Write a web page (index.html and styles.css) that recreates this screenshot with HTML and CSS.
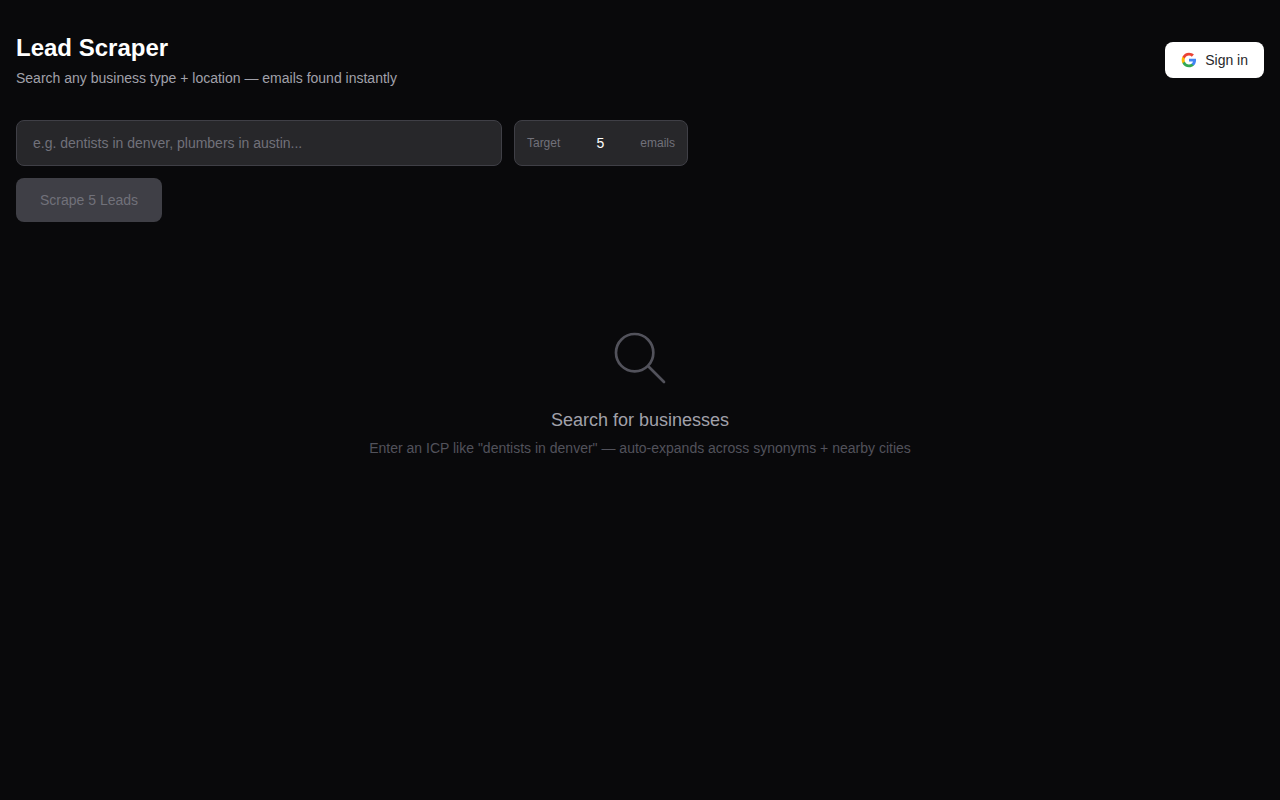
FILE: index.html
```html
<!DOCTYPE html>
<html lang="en">
<head>
    <meta charset="UTF-8">
    <meta name="viewport" content="width=device-width, initial-scale=1.0">
    <title>Lead Scraper</title>
    <link rel="stylesheet" href="styles.css">
</head>
<body>
    <main class="page">
        <header class="header">
            <div>
                <h1 class="title">Lead Scraper</h1>
                <p class="subtitle">Search any business type + location — emails found instantly</p>
            </div>
            <button class="sign-in" type="button">
                <svg class="google-icon" viewBox="0 0 24 24">
                    <path fill="#4285F4" d="M22.56 12.25c0-.78-.07-1.53-.2-2.25H12v4.26h5.92c-.26 1.37-1.04 2.53-2.21 3.31v2.77h3.57c2.08-1.92 3.28-4.74 3.28-8.09z"/>
                    <path fill="#34A853" d="M12 23c2.97 0 5.46-.98 7.28-2.66l-3.57-2.77c-.98.66-2.23 1.06-3.71 1.06-2.86 0-5.29-1.93-6.16-4.53H2.18v2.84C3.99 20.53 7.7 23 12 23z"/>
                    <path fill="#FBBC05" d="M5.84 14.09c-.22-.66-.35-1.36-.35-2.09s.13-1.43.35-2.09V7.07H2.18C1.43 8.55 1 10.22 1 12s.43 3.45 1.18 4.93l3.66-2.84z"/>
                    <path fill="#EA4335" d="M12 5.38c1.62 0 3.06.56 4.21 1.64l3.15-3.15C17.45 2.09 14.97 1 12 1 7.7 1 3.99 3.47 2.18 7.07l3.66 2.84c.87-2.6 3.3-4.53 6.16-4.53z"/>
                </svg>
                Sign in
            </button>
        </header>

        <form class="search-form">
            <input class="query" type="text" placeholder="e.g. dentists in denver, plumbers in austin...">
            <label class="target">
                <span>Target</span>
                <input class="target-count" type="number" min="1" value="5">
                <span>emails</span>
            </label>
            <button class="scrape-btn" type="submit" disabled>Scrape 5 Leads</button>
        </form>

        <section class="empty">
            <svg class="empty-icon" viewBox="0 0 24 24" fill="none" stroke="currentColor">
                <path stroke-linecap="round" stroke-linejoin="round" stroke-width="1" d="M21 21l-6-6m2-5a7 7 0 11-14 0 7 7 0 0114 0z"/>
            </svg>
            <p class="empty-title">Search for businesses</p>
            <p class="empty-text">Enter an ICP like "dentists in denver" — auto-expands across synonyms + nearby cities</p>
        </section>
    </main>
</body>
</html>
```
FILE: styles.css
```css
* {
    box-sizing: border-box;
}

body {
    margin: 0;
    min-height: 100vh;
    background-color: #09090b;
    color: #ffffff;
    font-family: "Liberation Sans", Arial, sans-serif;
    font-size: 14px;
    line-height: 20px;
}

h1,
p {
    margin: 0;
}

input,
button {
    font: inherit;
}

.page {
    max-width: 1280px;
    margin: 0 auto;
    padding: 32px 16px;
}

.header {
    display: flex;
    align-items: center;
    justify-content: space-between;
    margin-bottom: 32px;
}

.title {
    font-size: 24px;
    line-height: 32px;
    font-weight: bold;
}

.subtitle {
    margin-top: 4px;
    color: #a1a1aa;
}

.sign-in {
    display: flex;
    align-items: center;
    gap: 8px;
    padding: 8px 16px;
    border: none;
    border-radius: 8px;
    background-color: #ffffff;
    color: #27272a;
    cursor: pointer;
}

.google-icon {
    width: 16px;
    height: 16px;
}

/* search form */
.search-form {
    display: flex;
    flex-wrap: wrap;
    gap: 12px;
    max-width: 672px;
    margin-bottom: 24px;
}

.query {
    flex: 1;
    min-width: 400px;
    padding: 12px 16px;
    border: 1px solid #3f3f46;
    border-radius: 8px;
    background-color: #27272a;
    color: #ffffff;
}

.query::placeholder {
    color: #71717a;
}

.target {
    display: flex;
    align-items: center;
    gap: 8px;
    padding: 0 12px;
    border: 1px solid #3f3f46;
    border-radius: 8px;
    background-color: #27272a;
    color: #71717a;
    font-size: 12px;
}

.target-count {
    width: 64px;
    padding: 0;
    border: none;
    background: transparent;
    color: #ffffff;
    font-size: 14px;
    text-align: center;
    appearance: textfield;
}

.target-count::-webkit-inner-spin-button,
.target-count::-webkit-outer-spin-button {
    -webkit-appearance: none;
    margin: 0;
}

.scrape-btn {
    padding: 12px 24px;
    border: none;
    border-radius: 8px;
    background-color: #3f3f46;
    color: #71717a;
}

/* empty state */
.empty {
    display: flex;
    flex-direction: column;
    align-items: center;
    padding: 80px 0;
    text-align: center;
}

.empty-icon {
    width: 64px;
    height: 64px;
    margin-bottom: 16px;
    color: #52525b;
}

.empty-title {
    color: #a1a1aa;
    font-size: 18px;
    line-height: 28px;
}

.empty-text {
    margin-top: 4px;
    color: #52525b;
}
```
